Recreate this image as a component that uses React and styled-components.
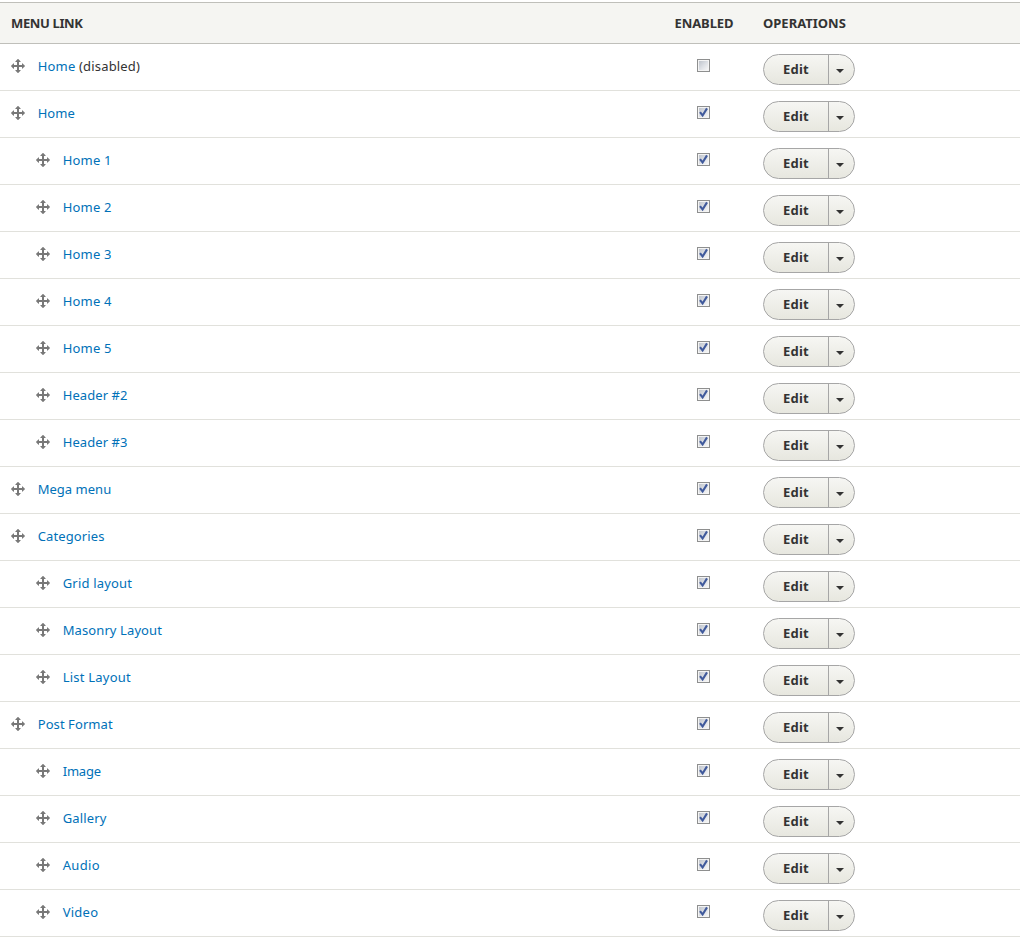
import React from 'react';
import styled, { createGlobalStyle } from 'styled-components';

const GlobalStyle = createGlobalStyle`
  * { box-sizing: border-box; }
  body {
    margin: 0;
    background: #fff;
    color: #333;
    font-family: "Noto Sans", "Open Sans", sans-serif;
    font-size: 13px;
    overflow: hidden;
  }
`;

const Page = styled.main`
  padding-top: 2px;
  width: 1020px;
  height: 939px;
`;

const Line = styled.div`
  display: grid;
  grid-template-columns: 644px 119px 1fr;
`;

const HeaderRow = styled(Line)`
  height: 42px;
  background: #f5f5f2;
  border-top: 1px solid #bfbfba;
  border-bottom: 1px solid #bfbfba;
  align-items: center;
`;

const HeaderCell = styled.div`
  font-weight: 700;
  line-height: 20px;
  white-space: nowrap;
  letter-spacing: ${(p) => p.$track || '0'};
  padding-left: ${(p) => p.$pad || '0'};
`;

const Row = styled(Line)`
  height: 47px;
  border-bottom: 1px solid #e1e1dc;
`;

const TitleCell = styled.div`
  display: flex;
  align-items: flex-start;
  gap: 11.7px;
  padding: 12px 0 0 ${(p) => 10 + p.$depth * 25}px;
`;

const MoveSvg = styled.svg`
  width: 16px;
  height: 16px;
  margin-top: 2px;
  fill: #787878;
`;

const Label = styled.div`
  line-height: 20px;
  letter-spacing: ${(p) => p.$track}px;
  white-space: nowrap;
`;

const Link = styled.a`
  color: #0071b8;
  text-decoration: none;
`;

const EnabledCell = styled.div`
  padding: 15px 0 0 53px;
`;

const Box = styled.span`
  display: block;
  width: 13px;
  height: 13px;
  padding: 1px;
  border: 1px solid #8e8f8f;
  background: #f4f4f4;
`;

const BoxFace = styled.span`
  display: block;
  width: 9px;
  height: 9px;
  margin: 0;
  background: linear-gradient(135deg, #bfc4cc 0%, #dcdfe4 50%, #f6f6f6 100%);
`;

const Tick = styled.svg`
  display: block;
  width: 9px;
  height: 9px;
  overflow: visible;
`;

const OperationsCell = styled.div`
  padding-top: 10px;
`;

const DropButton = styled.div`
  display: flex;
  width: 92px;
  height: 31px;
  border: 1px solid #a6a6a6;
  border-radius: 16px;
  background: linear-gradient(#f6f6f3, #e7e7df);
  overflow: hidden;
`;

const Action = styled.a`
  width: 64px;
  text-align: center;
  font-weight: 700;
  line-height: 29px;
  letter-spacing: 0.2px;
`;

const Toggle = styled.span`
  display: flex;
  flex: 1;
  padding: 14px 0 0 7px;
  border-left: 1px solid #a6a6a6;
`;

const Caret = styled.span`
  width: 8px;
  height: 4px;
  border: 4px solid transparent;
  border-top-color: #333;
  border-bottom: 0;
`;

const items = [
  { title: 'Home', depth: 0, disabled: true },
  { title: 'Home', depth: 0, track: 0.05 },
  { title: 'Home 1', depth: 1 },
  { title: 'Home 2', depth: 1 },
  { title: 'Home 3', depth: 1 },
  { title: 'Home 4', depth: 1 },
  { title: 'Home 5', depth: 1 },
  { title: 'Header #2', depth: 1, track: 0.08 },
  { title: 'Header #3', depth: 1, track: 0.08 },
  { title: 'Mega menu', depth: 0, track: 0.02 },
  { title: 'Categories', depth: 0, track: 0.12 },
  { title: 'Grid layout', depth: 1, track: 0.18 },
  { title: 'Masonry Layout', depth: 1, track: 0.1 },
  { title: 'List Layout', depth: 1, track: 0.22 },
  { title: 'Post Format', depth: 0, track: 0.08 },
  { title: 'Image', depth: 1, track: -0.2 },
  { title: 'Gallery', depth: 1, track: 0.14 },
  { title: 'Audio', depth: 1, track: 0.35 },
  { title: 'Video', depth: 1, track: 0.25 },
];

const MoveIcon = () => (
  <MoveSvg viewBox="0 0 16 16">
    <path d="M14.904 7.753l-2.373-2.372c-.291-.292-.529-.193-.529.22v1.399h-3v-3h1.398c.414 0 .512-.239.221-.53l-2.371-2.372c-.137-.136-.36-.136-.497 0l-2.372 2.372c-.292.292-.193.53.22.53h1.399v3h-3v-1.369c0-.413-.239-.511-.53-.22l-2.372 2.372c-.136.136-.136.359 0 .494l2.372 2.372c.291.292.53.192.53-.219v-1.43h3v3h-1.4c-.413 0-.511.238-.22.529l2.374 2.373c.137.137.36.137.495 0l2.373-2.373c.29-.291.19-.529-.222-.529h-1.399v-3h3v1.4c0 .413.238.511.529.219l2.373-2.371c.137-.137.137-.359.002-.495z" />
  </MoveSvg>
);

const Checkbox = ({ checked }) => (
  <Box role="checkbox" aria-checked={checked}>
    <BoxFace>
      {checked && (
        <Tick viewBox="0 0 9 9">
          <path d="M1 4.2 L3.6 7.5 L8 0.4" fill="none" stroke="#405a9c" strokeWidth="2.1" />
        </Tick>
      )}
    </BoxFace>
  </Box>
);

export default function App() {
  return (
    <>
      <GlobalStyle />
      <Page>
        <HeaderRow>
          <HeaderCell $pad="11px" $track="-0.36px">MENU LINK</HeaderCell>
          <HeaderCell $pad="30.5px" $track="-0.08px">ENABLED</HeaderCell>
          <HeaderCell>OPERATIONS</HeaderCell>
        </HeaderRow>
        {items.map((item, i) => (
          <Row key={i}>
            <TitleCell $depth={item.depth}>
              <MoveIcon />
              <Label $track={item.track ?? 0.18}>
                <Link>{item.title}</Link>
                {item.disabled && ' (disabled)'}
              </Label>
            </TitleCell>
            <EnabledCell>
              <Checkbox checked={!item.disabled} />
            </EnabledCell>
            <OperationsCell>
              <DropButton>
                <Action>Edit</Action>
                <Toggle>
                  <Caret />
                </Toggle>
              </DropButton>
            </OperationsCell>
          </Row>
        ))}
      </Page>
    </>
  );
}
